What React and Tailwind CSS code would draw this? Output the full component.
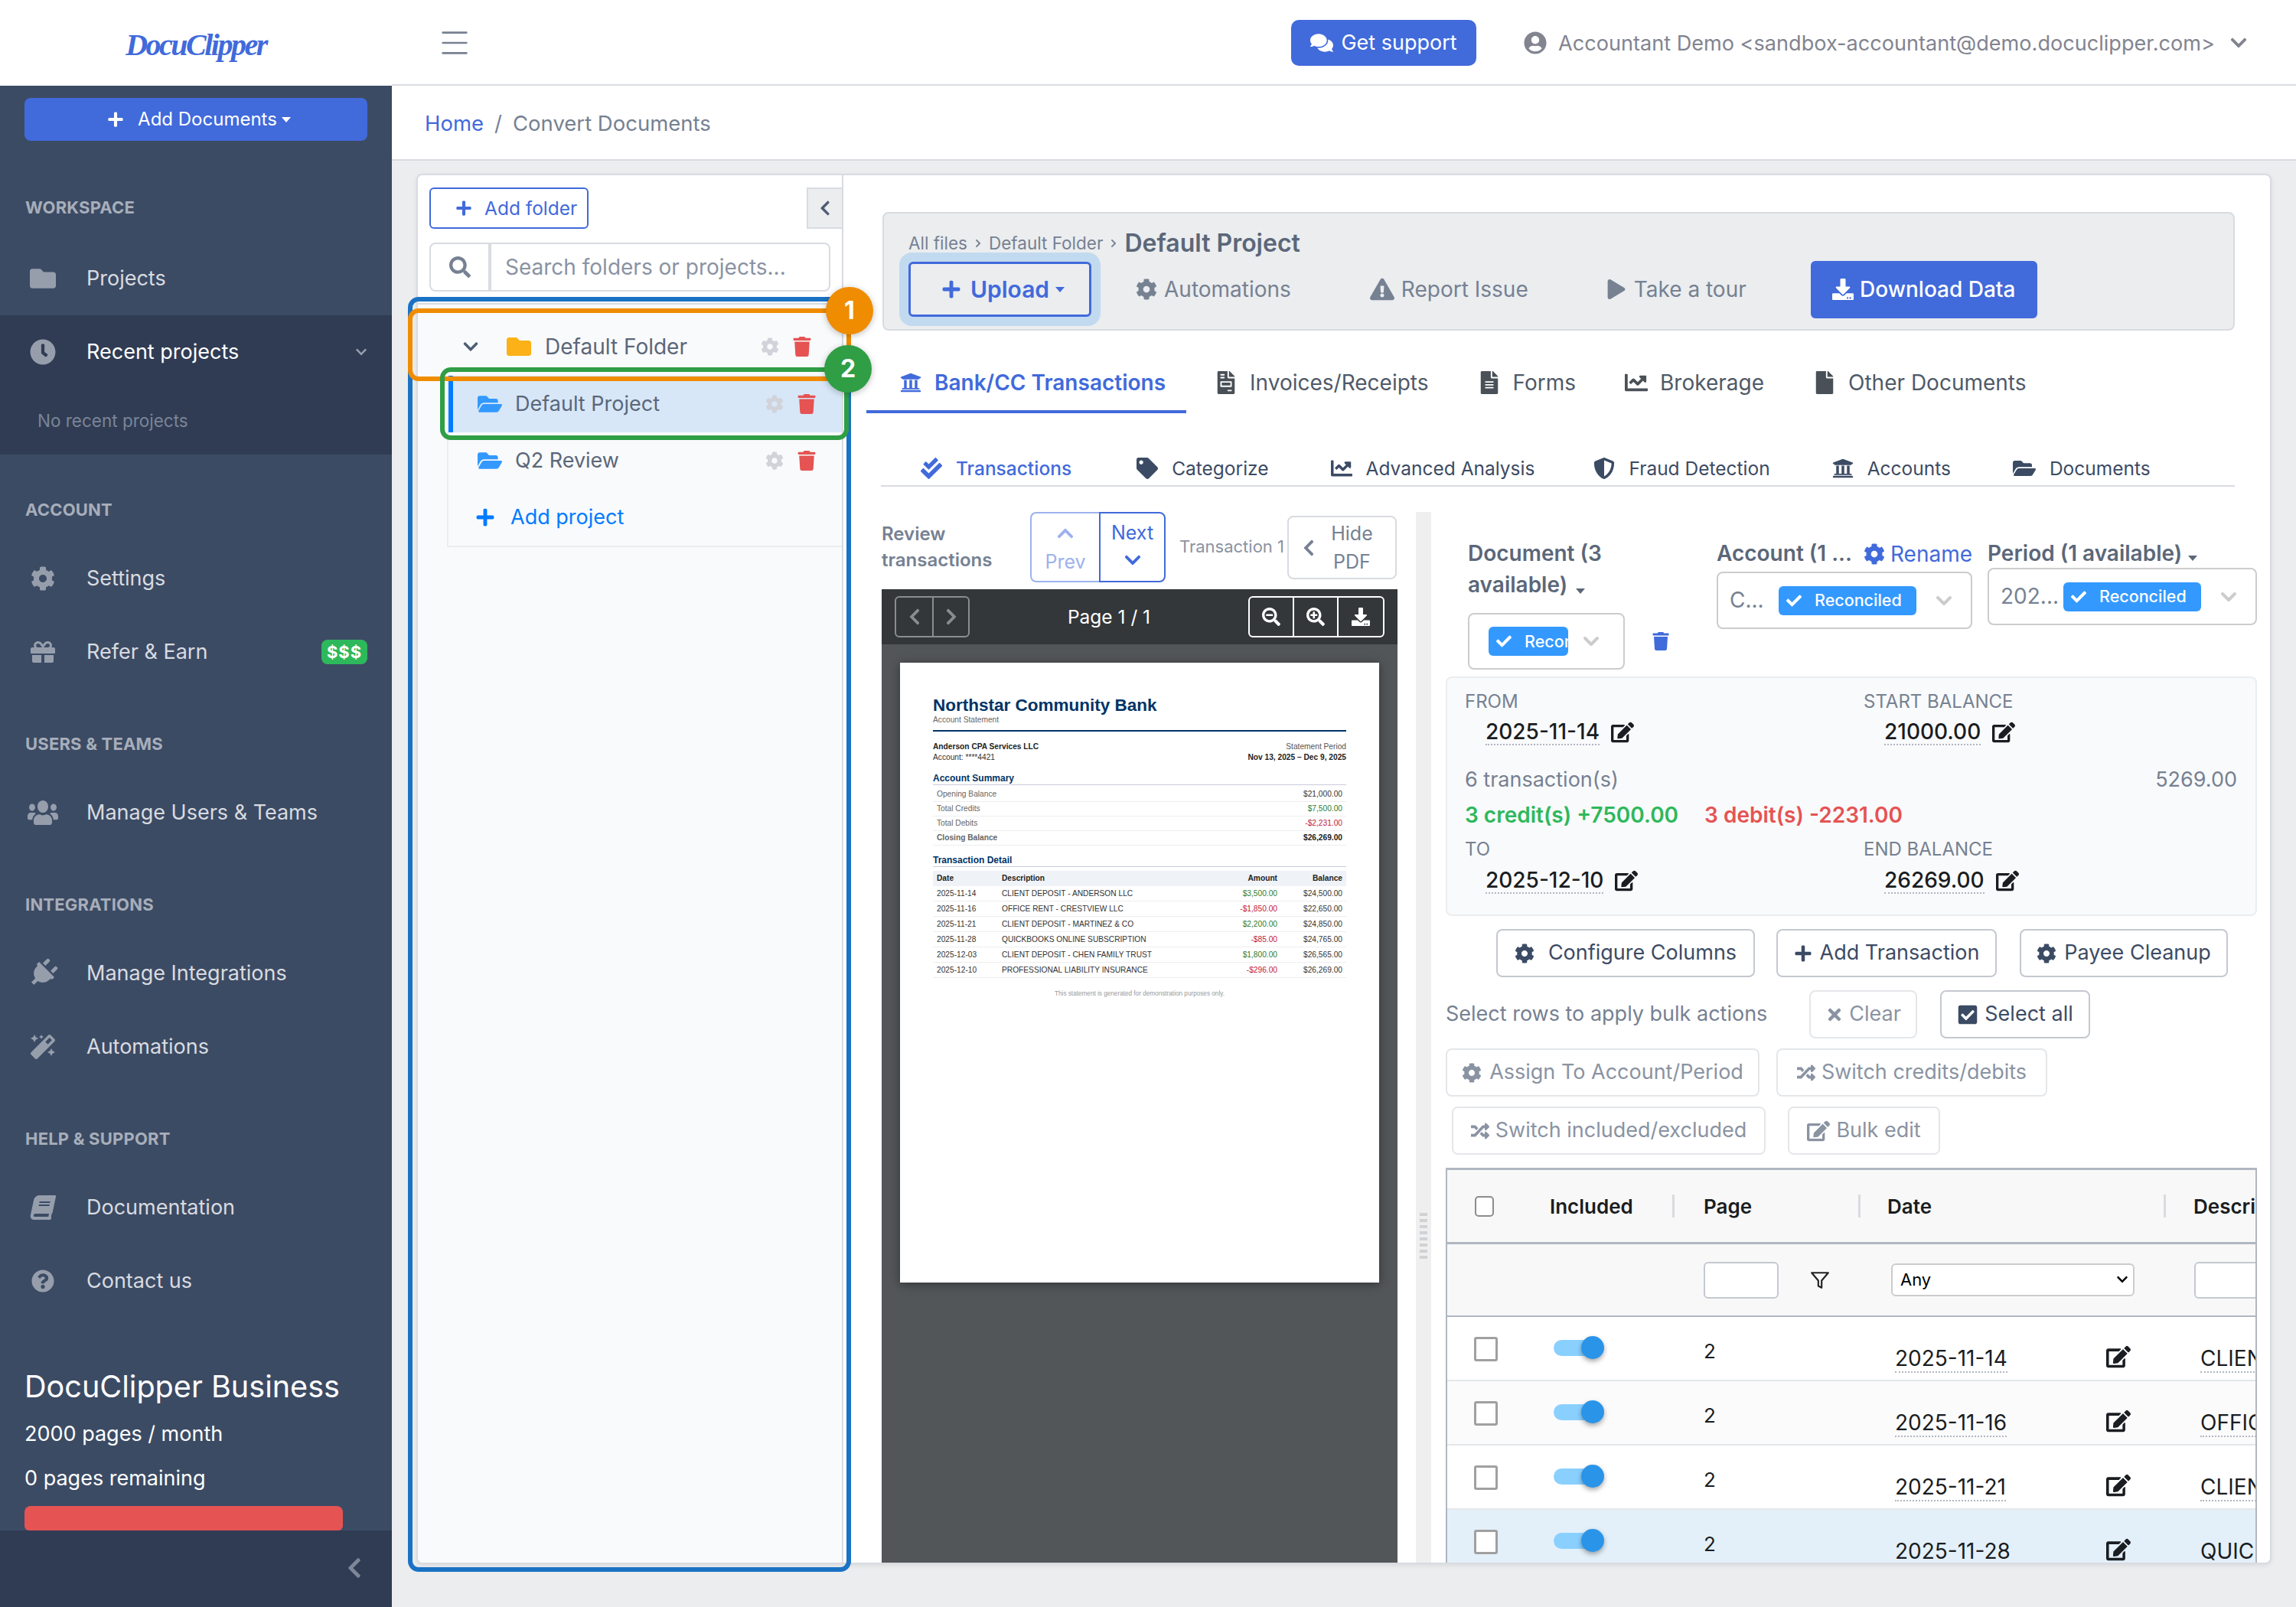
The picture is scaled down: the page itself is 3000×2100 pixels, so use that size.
import {
  FaPlus, FaFolder, FaFolderOpen, FaClock, FaCog, FaGift, FaUsers, FaPlug, FaMagic, FaBook,
  FaQuestionCircle, FaChevronLeft, FaChevronRight, FaChevronDown, FaChevronUp, FaSearch, FaTrash,
  FaComments, FaUserCircle, FaExclamationTriangle, FaPlay, FaDownload, FaUniversity, FaFileInvoice,
  FaFileAlt, FaFile, FaChartLine, FaCheckDouble, FaTag, FaShieldAlt, FaSearchMinus, FaSearchPlus,
  FaEdit, FaRandom, FaTimes, FaCheckSquare, FaCheck,
} from "react-icons/fa";
import { FiFilter } from "react-icons/fi";
import { Menu, ChevronDown } from "lucide-react";

function Caret({ color = "border-t-white" }) {
  return <span className={"inline-block w-0 h-0 border-x-[6px] border-t-[7px] border-x-transparent " + color} />;
}

function NavTitle({ children, className = "" }) {
  return (
    <div className={"h-[82px] pl-[33px] pt-[23px] text-[22px] leading-[34px] font-bold uppercase tracking-[0.2px] text-[#a7aeba] " + className}>
      {children}
    </div>
  );
}

function NavItem({ icon: Icon, size = 32, iconClass = "", active, children, right }) {
  return (
    <div className="h-[96px] flex items-center">
      <div className="w-[113px] flex justify-center pr-[1px]">
        <Icon size={size} className={"text-[#969eac] " + iconClass} />
      </div>
      <span className={"text-[27px] " + (active ? "text-white" : "text-[#d8dbe0]")}>{children}</span>
      {right}
    </div>
  );
}

function Sidebar() {
  return (
    <aside className="w-[512px] shrink-0 bg-[#3c4b64] flex flex-col">
      <div className="mt-[16px] mx-[32px] h-[56px] pl-[8px] rounded-[8px] bg-[#416adb] flex items-center justify-center text-white text-[24px]">
        <FaPlus size={22} className="mr-[18px]" />
        <span className="mr-[6px]">Add Documents</span>
        <Caret />
      </div>
      <NavTitle className="mt-[47px] mb-[3px]">Workspace</NavTitle>
      <NavItem icon={FaFolder} size={34}>Projects</NavItem>
      <div className="h-[182px] bg-[#303c54]">
        <NavItem icon={FaClock} size={34} active>
          <span>Recent projects</span>
        </NavItem>
        <div className="pl-[49px] mt-[26px] text-[22.5px] leading-[32px] text-[#7a8597]">No recent projects</div>
      </div>
      <FaChevronDown size={16} className="absolute left-[464px] top-[452px] text-[#969eac]" />
      <NavTitle className="mt-[32px]">Account</NavTitle>
      <NavItem icon={FaCog}>Settings</NavItem>
      <NavItem
        icon={FaGift}
        right={
          <span className="ml-auto mr-[32px] w-[60px] h-[32px] rounded-[8px] bg-[#2eb85c] text-white text-[22px] font-bold tracking-[1px] flex items-center justify-center">
            $$$
          </span>
        }
      >
        Refer &amp; Earn
      </NavItem>
      <NavTitle className="mt-[32px]">Users &amp; Teams</NavTitle>
      <NavItem icon={FaUsers} size={40} iconClass="scale-y-[1.15]">Manage Users &amp; Teams</NavItem>
      <NavTitle className="mt-[32px]">Integrations</NavTitle>
      <NavItem icon={FaPlug} size={38} iconClass="rotate-45">Manage Integrations</NavItem>
      <NavItem icon={FaMagic}>Automations</NavItem>
      <NavTitle className="mt-[32px]">Help &amp; Support</NavTitle>
      <NavItem icon={FaBook} iconClass="-skew-x-12">Documentation</NavItem>
      <NavItem icon={FaQuestionCircle} size={30}>Contact us</NavItem>
      <div className="flex-1 flex flex-col pl-[32px] text-white">
        <div className="mt-[64px] text-[39.6px] leading-[52px]">DocuClipper Business</div>
        <div className="mt-[15px] text-[27px] leading-[42px]">2000 pages / month</div>
        <div className="mt-[16px] text-[27px] leading-[42px]">0 pages remaining</div>
        <div className="mt-[15px] w-[416px] h-[32px] rounded-t-[8px] rounded-b-[6px] bg-[#e55353]" />
      </div>
      <div className="h-[100px] bg-[#303c54] flex items-start justify-end pr-[34px] pt-[34px]">
        <FaChevronLeft size={30} className="text-[#7d8798]" />
      </div>
    </aside>
  );
}

function Header() {
  return (
    <header className="h-[112px] shrink-0 flex bg-white">
      <div className="w-[512px] shrink-0 flex items-center justify-center pt-[6px]">
        <span className="text-[#416adb] text-[40px] italic font-bold tracking-[-2.5px] font-['Liberation_Serif',serif]">DocuClipper</span>
      </div>
      <div className="flex-1 h-[112px] pt-[2px] flex items-center border-b-2 border-[#d8dbe0] text-[#768192]">
        <Menu size={46} strokeWidth={1.4} className="ml-[59px]" />
        <div className="ml-auto h-[60px] w-[242px] rounded-[10px] bg-[#416adb] text-white flex items-center justify-center text-[27px] gap-[10px]">
          <FaComments size={30} />
          <span>Get support</span>
        </div>
        <FaUserCircle size={30} className="ml-[62px] text-[#828490]" />
        <span className="ml-[15px] pt-[2px] text-[27.1px] text-[#828490] whitespace-nowrap">
          Accountant Demo &lt;sandbox-accountant@demo.docuclipper.com&gt;
        </span>
        <FaChevronDown size={24} className="ml-[19px] mr-[63px] text-[#828490]" />
      </div>
    </header>
  );
}

function Tree() {
  return (
    <div className="w-[556px] shrink-0 flex flex-col border-r-2 border-[#d8dbe0]">
      <div className="h-[167px] shrink-0 bg-white">
        <div className="flex pt-[14px] ml-[15px] -mr-[2px] relative">
          <div className="mt-[2px] w-[208px] h-[54px] border-2 border-[#416adb] rounded-[6px] flex items-center pl-[32px] text-[#416adb] text-[24.5px]">
            <FaPlus size={22} className="mr-[16px]" />
            Add folder
          </div>
          <div className="ml-auto mt-[2px] w-[48px] h-[54px] bg-[#ebedef] border-2 border-[#d8dbe0] flex items-center justify-center">
            <FaChevronLeft size={22} className="text-[#4f5d73]" />
          </div>
        </div>
        <div className="flex ml-[15px] mt-[18px] h-[64px] w-[524px]">
          <div className="w-[79px] border-2 border-[#d8dbe0] rounded-l-[8px] flex items-center justify-center">
            <FaSearch size={28} className="text-[#768192]" />
          </div>
          <input
            readOnly
            placeholder="Search folders or projects..."
            className="flex-1 min-w-0 border-2 border-[#d8dbe0] rounded-r-[8px] pl-[18px] text-[28px] placeholder:text-[#8a93a2] outline-none"
          />
        </div>
      </div>
      <div className="flex-1 bg-[#f9fafb] border-t-2 border-[#d8dbe0]">
        <div className="h-[93px] flex items-center pt-[16px]">
          <FaChevronDown size={22} className="ml-[58px] text-[#4f5d73]" />
          <FaFolder size={32} className="ml-[36px] text-[#fbb117]" />
          <span className="ml-[18px] text-[28px] text-[#5b6779]">Default Folder</span>
          <FaCog size={24} className="ml-auto text-[#d0d3d9]" />
          <FaTrash size={26} className="ml-[17px] mr-[39px] text-[#e55353]" />
        </div>
        <div className="ml-[38px] h-[224px] border-l-2 border-b-2 border-[#ebedef]">
          <div className="h-[74px] bg-[#d7e7f8] border-l-[6px] border-[#007bff] flex items-center">
            <FaFolderOpen size={32} className="ml-[32px] text-[#3399ff]" />
            <span className="ml-[17px] text-[27px] text-[#5b6779]">Default Project</span>
            <FaCog size={24} className="ml-auto text-[#d0d3d9]" />
            <FaTrash size={26} className="ml-[17px] mr-[33px] text-[#e55353]" />
          </div>
          <div className="h-[74px] border-l-[6px] border-transparent flex items-center">
            <FaFolderOpen size={32} className="ml-[32px] text-[#3399ff]" />
            <span className="ml-[17px] text-[27px] text-[#5b6779]">Q2 Review</span>
            <FaCog size={24} className="ml-auto text-[#d0d3d9]" />
            <FaTrash size={26} className="ml-[17px] mr-[33px] text-[#e55353]" />
          </div>
          <div className="h-[74px] border-l-[6px] border-transparent flex items-center">
            <FaPlus size={26} className="ml-[29px] text-[#007bff]" />
            <span className="ml-[20px] text-[27px] text-[#007bff]">Add project</span>
          </div>
        </div>
      </div>
    </div>
  );
}

function Toolbar() {
  return (
    <div className="ml-[51px] mr-[46px] mt-[48px] h-[155px] shrink-0 bg-[#ebedef] border-2 border-[#d8dbe0] rounded-[8px] pl-[32px] pt-[20px]">
      <div className="h-[38px] flex items-center text-[22.5px] text-[#768192] whitespace-nowrap">
        <span>All files</span>
        <FaChevronRight size={12} className="mx-[8px]" />
        <span>Default Folder</span>
        <FaChevronRight size={12} className="mx-[8px]" />
        <span className="text-[32px] font-semibold text-[#5b6779]">Default Project</span>
      </div>
      <div className="mt-[5px] flex items-center h-[72px]">
        <div className="w-[239px] h-[72px] pl-[8px] border-[3px] border-[#416adb] rounded-[6px] shadow-[0_0_0_12px_#c2daf0] flex items-center justify-center text-[#416adb] text-[30px] font-semibold">
          <FaPlus size={26} className="mr-[12px]" />
          <span className="mr-[8px]">Upload</span>
          <Caret color="border-t-[#416adb]" />
        </div>
        <div className="ml-[58px] flex items-center text-[28px] text-[#768192]">
          <FaCog size={28} className="mr-[9px]" />
          Automations
        </div>
        <div className="ml-[103px] flex items-center text-[28px] text-[#768192]">
          <FaExclamationTriangle size={32} className="mr-[9px]" />
          Report Issue
        </div>
        <div className="ml-[102px] flex items-center text-[28px] text-[#768192]">
          <FaPlay size={26} className="mr-[10px]" />
          Take a tour
        </div>
        <div className="ml-[84px] w-[296px] h-[75px] rounded-[6px] bg-[#416adb] text-white flex items-center justify-center text-[28px] font-medium">
          <FaDownload size={28} className="mr-[8px]" />
          Download Data
        </div>
      </div>
    </div>
  );
}

const mainTabs = [
  { icon: FaFileInvoice, label: "Invoices/Receipts" },
  { icon: FaFileAlt, label: "Forms" },
  { icon: FaChartLine, label: "Brokerage" },
  { icon: FaFile, label: "Other Documents" },
];

const subTabs = [
  { icon: FaTag, label: "Categorize", size: 28, cls: "ml-[4px]" },
  { icon: FaChartLine, label: "Advanced Analysis", size: 28, cls: "" },
  { icon: FaShieldAlt, label: "Fraud Detection", size: 28, cls: "-ml-[4px]" },
  { icon: FaUniversity, label: "Accounts", size: 28, cls: "" },
  { icon: FaFolderOpen, label: "Documents", size: 30, cls: "" },
];

function Tabs() {
  return (
    <>
      <div className="ml-[30px] mt-[32px] h-[76px] shrink-0 flex">
        <div className="pl-[44px] pr-[27px] h-[76px] border-b-4 border-[#416adb] flex items-center text-[#416adb] text-[28px] font-semibold">
          <FaUniversity size={28} className="mr-[17px]" />
          Bank/CC Transactions
        </div>
        {mainTabs.map((t) => (
          <div key={t.label} className="pl-[37px] pr-[27px] pb-[4px] flex items-center text-[#4f5a68] text-[28px]">
            <t.icon size={30} className="mr-[16px] text-[#495057]" />
            {t.label}
          </div>
        ))}
      </div>
      <div className="ml-[49px] mr-[46px] mt-[36px] h-[60px] shrink-0 border-b-2 border-[#d8dbe0] flex items-center pl-[52px] pt-[14px] gap-[81px] text-[24.5px] text-[#3c4b64]">
        <div className="flex items-center text-[#416adb] font-medium">
          <FaCheckDouble size={28} className="mr-[18px]" />
          Transactions
        </div>
        {subTabs.map((t) => (
          <div key={t.label} className={"flex items-center " + t.cls}>
            <t.icon size={t.size} className="mr-[18px]" />
            {t.label}
          </div>
        ))}
      </div>
    </>
  );
}

function StatementPage() {
  const summary = [
    ["Opening Balance", "$21,000.00", "text-[#333]"],
    ["Total Credits", "$7,500.00", "text-[#2e7d32]"],
    ["Total Debits", "-$2,231.00", "text-[#c2183c]"],
  ];
  const rows = [
    ["2025-11-14", "CLIENT DEPOSIT - ANDERSON LLC", "$3,500.00", "$24,500.00", true],
    ["2025-11-16", "OFFICE RENT - CRESTVIEW LLC", "-$1,850.00", "$22,650.00", false],
    ["2025-11-21", "CLIENT DEPOSIT - MARTINEZ & CO", "$2,200.00", "$24,850.00", true],
    ["2025-11-28", "QUICKBOOKS ONLINE SUBSCRIPTION", "-$85.00", "$24,765.00", false],
    ["2025-12-03", "CLIENT DEPOSIT - CHEN FAMILY TRUST", "$1,800.00", "$26,565.00", true],
    ["2025-12-10", "PROFESSIONAL LIABILITY INSURANCE", "-$296.00", "$26,269.00", false],
  ];
  return (
    <div className="mx-auto w-[626px] h-[810px] bg-white px-[43px] pt-[42px] shadow-[0_2px_12px_rgba(0,0,0,0.4)] font-['Liberation_Sans',sans-serif] text-[10.2px] text-[#333] whitespace-nowrap">
      <div className="h-[28px] leading-[28px] text-[22.5px] font-bold text-[#003366]">Northstar Community Bank</div>
      <div className="h-[10px] leading-[10px] text-[#666]">Account Statement</div>
      <div className="mt-[8px] h-[2px] bg-[#003366]" />
      <div className="mt-[13px] flex justify-between h-[14px] leading-[14px]">
        <span className="font-bold text-[#222]">Anderson CPA Services LLC</span>
        <span className="text-[#555]">Statement Period</span>
      </div>
      <div className="flex justify-between h-[14px] leading-[14px]">
        <span>Account: ****4421</span>
        <span className="font-bold text-[#222]">Nov 13, 2025 – Dec 9, 2025</span>
      </div>
      <div className="mt-[12px] h-[17px] leading-[16px] text-[12px] font-bold text-[#003366] border-b border-[#ccccdd]">Account Summary</div>
      <div className="mt-[3px]">
        {summary.map(([a, b, c]) => (
          <div key={a} className="h-[19px] flex justify-between items-center px-[5px] border-b border-[#eeeeee]">
            <span className="text-[#666]">{a}</span>
            <span className={c}>{b}</span>
          </div>
        ))}
        <div className="h-[19px] flex justify-between items-center px-[5px] border-b border-[#eeeeee] font-bold">
          <span className="text-[#666]">Closing Balance</span>
          <span className="text-[#222]">$26,269.00</span>
        </div>
      </div>
      <div className="mt-[11px] h-[17px] leading-[16px] text-[12px] font-bold text-[#003366] border-b border-[#ccccdd]">Transaction Detail</div>
      <div className="mt-[5px] h-[20px] bg-[#eff2f7] flex items-center font-bold text-[#222] px-[5px]">
        <span className="w-[85px]">Date</span>
        <span>Description</span>
        <span className="ml-auto">Amount</span>
        <span className="w-[85px] text-right">Balance</span>
      </div>
      {rows.map(([d, desc, amt, bal, credit]) => (
        <div key={d} className="h-[20px] flex items-center border-b border-[#eeeeee] px-[5px]">
          <span className="w-[85px]">{d}</span>
          <span>{desc}</span>
          <span className={"ml-auto " + (credit ? "text-[#2e7d32]" : "text-[#c2183c]")}>{amt}</span>
          <span className="w-[85px] text-right">{bal}</span>
        </div>
      ))}
      <div className="mt-[15px] h-[12px] leading-[12px] text-center text-[8.2px] text-[#999]">
        This statement is generated for demonstration purposes only.
      </div>
    </div>
  );
}

function PdfPane() {
  return (
    <div className="ml-[50px] w-[674px] shrink-0 flex flex-col">
      <div className="h-[92px] shrink-0 flex">
        <div className="w-[194px] mt-[12px] text-[24px] leading-[34px] font-semibold text-[#768192]">
          Review
          <br />
          transactions
        </div>
        <div className="w-[177px] h-[92px] flex text-[25px] text-[#416adb]">
          <div className="w-[90px] pt-[14px] border-2 border-r-0 border-[#9db2ee] rounded-l-[8px] flex flex-col items-center gap-[8px] text-[#9db2ee]">
            <FaChevronUp size={24} />
            <span className="leading-[34px]">Prev</span>
          </div>
          <div className="flex-1 pt-[8px] border-2 border-[#416adb] rounded-r-[8px] flex flex-col items-center gap-[7px]">
            <span className="leading-[34px]">Next</span>
            <FaChevronDown size={24} />
          </div>
        </div>
        <div className="w-[142px] ml-[18px] pt-[28px] text-[22px] leading-[34px] text-[#8a93a2] whitespace-nowrap">
          Transaction 1
        </div>
        <div className="-ml-[1px] mt-[5px] w-[143px] h-[83px] border-2 border-[#d8dbe0] rounded-[8px] flex items-center text-[#768192] text-[25px]">
          <FaChevronLeft size={24} className="ml-[14px]" />
          <span className="flex-1 text-center leading-[37px] pr-[12px]">
            Hide
            <br />
            PDF
          </span>
        </div>
      </div>
      <div className="mt-[9px] h-[72px] shrink-0 bg-[#33373a] flex items-center px-[17px] text-white">
        <div className="w-[98px] h-[54px] border-2 border-[#8a8d90] rounded-[6px] flex text-[#8a8d90]">
          <div className="w-[49px] border-r-2 border-[#8a8d90] flex items-center justify-center"><FaChevronLeft size={24} /></div>
          <div className="flex-1 flex items-center justify-center"><FaChevronRight size={24} /></div>
        </div>
        <span className="flex-1 text-center text-[24.5px]">Page 1 / 1</span>
        <div className="w-[178px] h-[54px] border-2 border-white rounded-[6px] flex">
          <div className="w-[58px] border-r-2 border-white flex items-center justify-center"><FaSearchMinus size={24} /></div>
          <div className="w-[58px] border-r-2 border-white flex items-center justify-center"><FaSearchPlus size={24} /></div>
          <div className="flex-1 flex items-center justify-center"><FaDownload size={24} /></div>
        </div>
      </div>
      <div className="flex-1 min-h-0 overflow-hidden bg-[#525659] pt-[24px]">
        <StatementPage />
      </div>
    </div>
  );
}

function DocSelect({ className, children, chevronClass = "ml-[22px]" }) {
  return (
    <div className={"border-2 border-[#cccccc] rounded-[8px] flex items-center bg-white " + className}>
      {children}
      <ChevronDown size={32} strokeWidth={3} className={"text-[#cccccc] " + chevronClass} />
    </div>
  );
}

function Pill({ className = "w-[180px]", label = "Reconciled" }) {
  return (
    <span className={"h-[38px] rounded-[6px] bg-[#3399ff] text-white text-[21.5px] font-medium flex items-center overflow-hidden whitespace-nowrap " + className}>
      <FaCheck size={20} className="ml-[10px] mr-[17px] shrink-0" />
      {label}
    </span>
  );
}

function EditValue({ value, className = "" }) {
  return (
    <div className={"h-[36px] pl-[27px] flex items-center text-[28px] text-[#1a1d21] font-medium " + className}>
      <span className="border-b-2 border-dotted border-[#b1b7c1] leading-[32px]">{value}</span>
      <FaEdit size={30} className="ml-[15px]" />
    </div>
  );
}

function Summary() {
  return (
    <div className="ml-[19px] mt-[9px] w-[1060px] h-[313px] shrink-0 bg-[#f9fafb] border-2 border-[#ebedef] rounded-[8px] pl-[23px] pr-[24px] pt-[14px]">
      <div className="grid grid-cols-[521px_1fr] text-[24px] leading-[34px] text-[#768192]">
        <span>FROM</span>
        <span>START BALANCE</span>
      </div>
      <div className="grid grid-cols-[521px_1fr] mt-[5px]">
        <EditValue value="2025-11-14" />
        <EditValue value="21000.00" />
      </div>
      <div className="mt-[27px] flex justify-between text-[27px] leading-[34px] text-[#768192]">
        <span>6 transaction(s)</span>
        <span>5269.00</span>
      </div>
      <div className="mt-[12px] flex text-[28px] leading-[34px] font-semibold">
        <span className="text-[#2eb85c]">3 credit(s) +7500.00</span>
        <span className="ml-[34px] text-[#e55353]">3 debit(s) -2231.00</span>
      </div>
      <div className="mt-[11px] grid grid-cols-[521px_1fr] text-[24px] leading-[34px] text-[#768192]">
        <span>TO</span>
        <span>END BALANCE</span>
      </div>
      <div className="grid grid-cols-[521px_1fr] mt-[6px]">
        <EditValue value="2025-12-10" />
        <EditValue value="26269.00" />
      </div>
    </div>
  );
}

function Btn({ icon: Icon, iconSize = 28, width, children, dim, gap = "mr-[10px]", className = "" }) {
  return (
    <div
      className={
        "h-[63px] rounded-[8px] border-2 flex items-center justify-center text-[27px] whitespace-nowrap " +
        (dim ? "border-[#e4e7ea] text-[#8a93a2] " : "border-[#c4c9d0] text-[#3c4b64] ") +
        width + " " + className
      }
    >
      <Icon size={iconSize} className={gap} />
      {children}
    </div>
  );
}

const tableRows = [
  { date: "2025-11-14", desc: "CLIENT DEPOSIT - ANDERSON LLC", bg: "bg-white" },
  { date: "2025-11-16", desc: "OFFICE RENT - CRESTVIEW LLC", bg: "bg-[#fbfbfc]" },
  { date: "2025-11-21", desc: "CLIENT DEPOSIT - MARTINEZ & CO", bg: "bg-white" },
  { date: "2025-11-28", desc: "QUICKBOOKS ONLINE SUBSCRIPTION", bg: "bg-[#e3f0fa]" },
];

function Divider() {
  return <div className="w-[3px] h-[30px] bg-[#d8dbe0] ml-auto" />;
}

function Table() {
  return (
    <div className="ml-[19px] mt-[17px] w-[1060px] flex-1 overflow-hidden border-x-2 border-t-[3px] border-[#b1b7c1]">
      <div className="h-[97px] bg-[#f8f8f8] border-b-[3px] border-[#b1b7c1] flex items-center text-[26px] font-semibold text-[#1a1d21]">
        <div className="w-[134px] shrink-0 pl-[36px]">
          <input readOnly type="checkbox" className="appearance-none block w-[25px] h-[27px] bg-white border-2 border-[#8a8d90] rounded-[5px]" />
        </div>
        <div className="w-[166px] shrink-0 flex items-center pr-[3px]">Included<Divider /></div>
        <div className="w-[240px] shrink-0 pl-[35px] flex items-center">Page<Divider /></div>
        <div className="w-[399px] shrink-0 pl-[35px] flex items-center">Date<Divider /></div>
        <div className="pl-[36px] whitespace-nowrap">Description</div>
      </div>
      <div className="h-[95px] bg-[#f8f8f8] border-b-2 border-[#b1b7c1] flex items-center">
        <div className="w-[335px] shrink-0" />
        <input readOnly className="w-[98px] h-[48px] shrink-0 bg-white border-2 border-[#c4c9d0] rounded-[6px]" />
        <FiFilter size={26} className="ml-[41px] shrink-0 text-[#222]" />
        <div className="relative ml-[80px] w-[318px] h-[43px] shrink-0">
          <select className="appearance-none w-full h-full bg-white border-2 border-[#cccccc] rounded-[6px] pl-[10px] text-[22px] text-black font-['Inter',sans-serif]">
            <option>Any</option>
          </select>
          <FaChevronDown size={16} className="absolute right-[8px] top-[13px] text-black pointer-events-none" />
        </div>
        <input readOnly className="ml-[78px] w-[120px] h-[48px] shrink-0 bg-white border-2 border-[#c4c9d0] rounded-[6px]" />
      </div>
      {tableRows.map((r) => (
        <div key={r.date} className={"h-[84px] border-b-2 border-[#e4e7ea] flex " + r.bg}>
          <div className="w-[335px] shrink-0 flex pl-[35px] pt-[26px]">
            <input readOnly type="checkbox" className="appearance-none block w-[31px] h-[32px] bg-white border-[3px] border-[#a0a0a0] rounded-[3px]" />
            <div className="relative ml-[73px] mt-[4px] w-[55px] h-[21px] rounded-full bg-[#8ad0ff]">
              <div className="absolute right-[-11px] top-[-5px] w-[30px] h-[30px] rounded-full bg-[#2a94e8] shadow-[0_3px_6px_rgba(0,0,0,0.35)]" />
            </div>
          </div>
          <div className="w-[250px] shrink-0 pt-[28px] text-[26px] leading-[34px] text-[#1a1d21]">2</div>
          <div className="w-[276px] shrink-0 pt-[37px]">
            <span className="text-[28px] leading-[34px] text-[#1a1d21] border-b-2 border-dotted border-[#b1b7c1]">{r.date}</span>
          </div>
          <div className="w-[123px] shrink-0 pt-[36px]">
            <FaEdit size={32} className="text-[#1a1d21]" />
          </div>
          <div className="pt-[37px] whitespace-nowrap">
            <span className="text-[28px] leading-[34px] text-[#1a1d21] border-b-2 border-dotted border-[#b1b7c1]">{r.desc}</span>
          </div>
        </div>
      ))}
    </div>
  );
}

function DataPane() {
  return (
    <div className="flex-1 min-w-0 flex flex-col overflow-hidden">
      <div className="flex pl-[48px] pt-[34px] h-[206px] shrink-0 text-[28px] leading-[41px] font-semibold text-[#5b6779]">
        <div className="w-[325px] shrink-0">
          <div className="h-[82px] w-[240px]">
            Document (3 available) <span className="inline-block align-middle ml-[4px]"><Caret color="border-t-[#5b6779]" /></span>
          </div>
          <div className="mt-[16px] flex items-center">
            <DocSelect className="w-[205px] h-[74px] pl-[25px]" chevronClass="ml-[14px]">
              <Pill className="w-[104px]" label="Reconciled" />
            </DocSelect>
            <FaTrash size={24} className="ml-[35px] text-[#416adb]" />
          </div>
        </div>
        <div className="w-[354px] shrink-0">
          <div className="h-[40px] flex items-center whitespace-nowrap">
            Account (1 ...
            <FaCog size={28} className="ml-[15px] mr-[7px] mt-[2px] text-[#416adb]" />
            <span className="mt-[2px] font-normal text-[#416adb]">Rename</span>
          </div>
          <DocSelect className="mt-[4px] w-[334px] h-[75px] pl-[15px] font-normal text-[#768192]" chevronClass="ml-[20px]">
            <span className="w-[64px]">C...</span>
            <Pill />
          </DocSelect>
        </div>
        <div className="shrink-0">
          <div className="h-[40px] flex items-center whitespace-nowrap">
            Period (1 available)
            <span className="ml-[8px] inline-block"><Caret color="border-t-[#5b6779]" /></span>
          </div>
          <DocSelect className="-mt-[1px] w-[352px] h-[75px] pl-[15px] font-normal text-[#768192]" chevronClass="ml-[20px]">
            <span className="w-[82px]">202...</span>
            <Pill />
          </DocSelect>
        </div>
      </div>
      <Summary />
      <div className="flex ml-[85px] mt-[17px] shrink-0">
        <Btn icon={FaCog} width="w-[338px]" gap="mr-[18px]" iconSize={26}>Configure Columns</Btn>
        <Btn icon={FaPlus} width="w-[288px]" className="ml-[28px]" iconSize={24}>Add Transaction</Btn>
        <Btn icon={FaCog} width="w-[272px]" className="ml-[30px]" iconSize={26}>Payee Cleanup</Btn>
      </div>
      <div className="flex items-center ml-[19px] mt-[17px] shrink-0">
        <span className="w-[475px] text-[27px] text-[#768192]">Select rows to apply bulk actions</span>
        <Btn dim icon={FaTimes} width="w-[141px]" iconSize={24} gap="mr-[7px]">Clear</Btn>
        <Btn icon={FaCheckSquare} width="w-[196px]" className="ml-[30px]" iconSize={28} gap="mr-[8px]">Select all</Btn>
      </div>
      <div className="flex ml-[19px] mt-[13px] shrink-0">
        <Btn dim icon={FaCog} width="w-[410px]" iconSize={26}>Assign To Account/Period</Btn>
        <Btn dim icon={FaRandom} width="w-[354px]" className="ml-[22px]" iconSize={24} gap="mr-[8px]">Switch credits/debits</Btn>
      </div>
      <div className="flex ml-[27px] mt-[13px] shrink-0">
        <Btn dim icon={FaRandom} width="w-[410px]" iconSize={24} gap="mr-[8px]">Switch included/excluded</Btn>
        <Btn dim icon={FaEdit} width="w-[199px]" className="ml-[29px]" iconSize={30} gap="mr-[8px]">Bulk edit</Btn>
      </div>
      <Table />
    </div>
  );
}

function Overlays() {
  return (
    <>
      <div className="absolute left-[533px] top-[388px] w-[579px] h-[1666px] border-[6px] border-[#1a72c4] rounded-[14px]" />
      <div className="absolute left-[533px] top-[403px] w-[579px] h-[95px] border-[6px] border-[#f08c00] rounded-[14px]" />
      <div className="absolute left-[575px] top-[480px] w-[534px] h-[95px] border-[6px] border-[#2f9e44] rounded-[14px]" />
      <div className="absolute left-[1079px] top-[375px] w-[62px] h-[62px] rounded-full bg-[#f08c00] text-white text-[32px] font-bold flex items-center justify-center shadow-[0_2px_8px_rgba(0,0,0,0.25)]">1</div>
      <div className="absolute left-[1077px] top-[451px] w-[62px] h-[62px] rounded-full bg-[#2f9e44] text-white text-[32px] font-bold flex items-center justify-center shadow-[0_2px_8px_rgba(0,0,0,0.25)]">2</div>
    </>
  );
}

export default function App() {
  return (
    <div className="relative w-[3000px] h-[2100px] overflow-hidden flex flex-col bg-[#ebedef] font-['Inter',sans-serif]">
      <Header />
      <div className="flex flex-1 min-h-0">
        <Sidebar />
        <main className="flex-1 min-w-0 flex flex-col">
          <div className="h-[98px] shrink-0 pt-[4px] bg-white border-b-2 border-[#d8dbe0] flex items-center pl-[43px] text-[27.5px] text-[#768192]">
            <span className="text-[#416adb]">Home</span>
            <span className="mx-[14px]">/</span>
            <span>Convert Documents</span>
          </div>
          <div className="ml-[32px] mt-[17px] w-[2424px] h-[1817px] shrink-0 flex bg-white border-2 border-[#d8dbe0] rounded-[8px] overflow-hidden shadow-[0_2px_6px_rgba(0,0,0,0.08)]">
            <Tree />
            <div className="flex-1 min-w-0 flex flex-col">
              <Toolbar />
              <Tabs />
              <div className="flex flex-1 min-h-0 mt-[33px]">
                <PdfPane />
                <div className="ml-[24px] w-[20px] shrink-0 bg-[#efefef] flex flex-col items-center pt-[916px]">
                  <div className="w-[10px] h-[60px] bg-[repeating-linear-gradient(0deg,#cfd2d6_0_4px,transparent_4px_8px)]" />
                </div>
                <DataPane />
              </div>
            </div>
          </div>
        </main>
      </div>
      <Overlays />
    </div>
  );
}
